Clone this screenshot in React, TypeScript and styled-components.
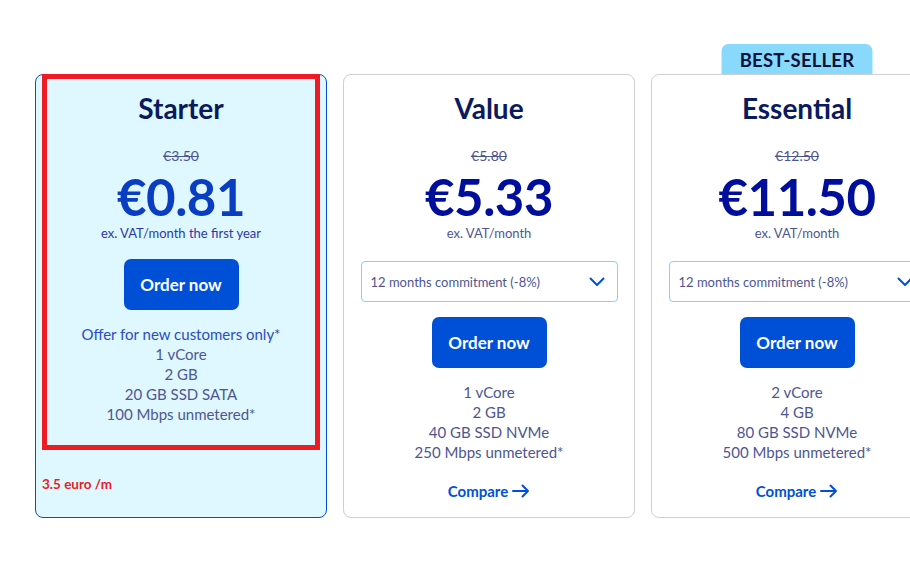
import React from "react";
import styled, { createGlobalStyle } from "styled-components";

const Global = createGlobalStyle`
  html, body { margin: 0; padding: 0; background: #ffffff; overflow: hidden; }
  body { font-family: "Source Sans Pro", Lato, "Liberation Sans", sans-serif; }
`;

const Page = styled.div`
  width: 910px;
  height: 572px;
  overflow: hidden;
  padding: 74px 0 0 35px;
  box-sizing: border-box;
`;

const Row = styled.div`
  display: flex;
  gap: 16px;
  align-items: stretch;
  width: max-content;
`;

const Card = styled.div<{ $selected?: boolean }>`
  position: relative;
  width: 292px;
  height: 444px;
  box-sizing: border-box;
  border: 1px solid ${(p) => (p.$selected ? "#0050d7" : "#cfcfcf")};
  background: ${(p) => (p.$selected ? "#dff7fe" : "#ffffff")};
  border-radius: 8px;
  display: flex;
  flex-direction: column;
  align-items: center;
  padding: 16px 16px 0;
`;

const Badge = styled.div`
  position: absolute;
  top: -31px;
  left: 50%;
  transform: translateX(-50%);
  width: 151px;
  height: 30px;
  background: #88d9fc;
  border-radius: 7px 7px 0 0;
  display: flex;
  align-items: center;
  justify-content: center;
  padding-top: 2px;
  box-sizing: border-box;
  font-size: 18.5px;
  font-weight: 700;
  color: #0d1236;
  letter-spacing: 0.2px;
`;

const Title = styled.h2`
  margin: 0;
  font-size: 28px;
  line-height: 34px;
  font-weight: 700;
  color: #0b1a5c;
`;

const OldPrice = styled.div`
  margin-top: 22px;
  font-size: 14px;
  line-height: 18px;
  color: #4d5693;
  text-decoration: line-through;
`;

const Price = styled.div<{ $selected?: boolean }>`
  margin-top: 7px;
  font-size: 51px;
  line-height: 50px;
  font-weight: 700;
  color: ${(p) => (p.$selected ? "#0a3ec2" : "#000e9c")};
  letter-spacing: -0.5px;
`;

const Period = styled.div<{ $selected?: boolean }>`
  margin-top: 3px;
  font-size: 13px;
  line-height: 16px;
  color: ${(p) => (p.$selected ? "#2b3aa8" : "#4d5693")};
`;

const Select = styled.div`
  margin-top: 20px;
  width: 257px;
  height: 41px;
  box-sizing: border-box;
  border: 1px solid #80d4f8;
  border-radius: 4px;
  display: flex;
  align-items: center;
  justify-content: space-between;
  padding: 0 12px 0 9px;
  font-size: 13px;
  color: #4d5693;
`;

const OrderButton = styled.button<{ $first?: boolean }>`
  margin-top: ${(p) => (p.$first ? "18px" : "15px")};
  width: 115px;
  height: 51px;
  border: none;
  border-radius: 7px;
  background: #0050d7;
  color: #ffffff;
  font-family: inherit;
  font-size: 17px;
  font-weight: 700;
  cursor: pointer;
`;

const Features = styled.ul`
  list-style: none;
  margin: 14px 0 0;
  padding: 0;
  text-align: center;
  font-size: 15px;
  line-height: 20px;
  color: #4d5693;
`;

const Offer = styled.li`
  color: #2a4cc4;
`;

const Compare = styled.a`
  margin-top: 20px;
  display: flex;
  align-items: center;
  gap: 4px;
  font-size: 15px;
  font-weight: 700;
  color: #0050d7;
  text-decoration: none;
`;

const Note = styled.div`
  position: absolute;
  left: 6px;
  top: 401px;
  font-size: 13.5px;
  font-weight: 700;
  color: #ea1c24;
`;

const Highlight = styled.div`
  position: absolute;
  left: 6px;
  top: -1px;
  width: 278px;
  height: 376px;
  box-sizing: border-box;
  border: 5px solid #ed1c24;
  pointer-events: none;
`;

const Chevron = () => (
  <svg width="16" height="10" viewBox="0 0 16 10" fill="none">
    <path d="M1.5 1.5 L8 8 L14.5 1.5" stroke="#0050d7" strokeWidth="2" strokeLinecap="round" strokeLinejoin="round" />
  </svg>
);

const Arrow = () => (
  <svg width="18" height="14" viewBox="0 0 18 14" fill="none">
    <path d="M1 7 H16 M10.5 1.5 L16 7 L10.5 12.5" stroke="#0050d7" strokeWidth="2" strokeLinecap="round" strokeLinejoin="round" />
  </svg>
);

type Plan = {
  name: string;
  old: string;
  price: string;
  period: string;
  features: string[];
  selected?: boolean;
  badge?: string;
};

const plans: Plan[] = [
  {
    name: "Starter",
    old: "€3.50",
    price: "€0.81",
    period: "ex. VAT/month the first year",
    features: ["1 vCore", "2 GB", "20 GB SSD SATA", "100 Mbps unmetered*"],
    selected: true,
  },
  {
    name: "Value",
    old: "€5.80",
    price: "€5.33",
    period: "ex. VAT/month",
    features: ["1 vCore", "2 GB", "40 GB SSD NVMe", "250 Mbps unmetered*"],
  },
  {
    name: "Essential",
    old: "€12.50",
    price: "€11.50",
    period: "ex. VAT/month",
    features: ["2 vCore", "4 GB", "80 GB SSD NVMe", "500 Mbps unmetered*"],
    badge: "BEST-SELLER",
  },
];

export default function App() {
  return (
    <>
      <Global />
      <Page>
        <Row>
          {plans.map((p) => (
            <Card key={p.name} $selected={p.selected}>
              {p.badge && <Badge>{p.badge}</Badge>}
              <Title>{p.name}</Title>
              <OldPrice>{p.old}</OldPrice>
              <Price $selected={p.selected}>{p.price}</Price>
              <Period $selected={p.selected}>{p.period}</Period>
              {!p.selected && (
                <Select>
                  <span>12 months commitment (-8%)</span>
                  <Chevron />
                </Select>
              )}
              <OrderButton $first={p.selected}>Order now</OrderButton>
              <Features>
                {p.selected && <Offer>Offer for new customers only*</Offer>}
                {p.features.map((f) => (
                  <li key={f}>{f}</li>
                ))}
              </Features>
              {p.selected ? (
                <>
                  <Note>3.5 euro /m</Note>
                  <Highlight />
                </>
              ) : (
                <Compare href="#">
                  Compare <Arrow />
                </Compare>
              )}
            </Card>
          ))}
        </Row>
      </Page>
    </>
  );
}
